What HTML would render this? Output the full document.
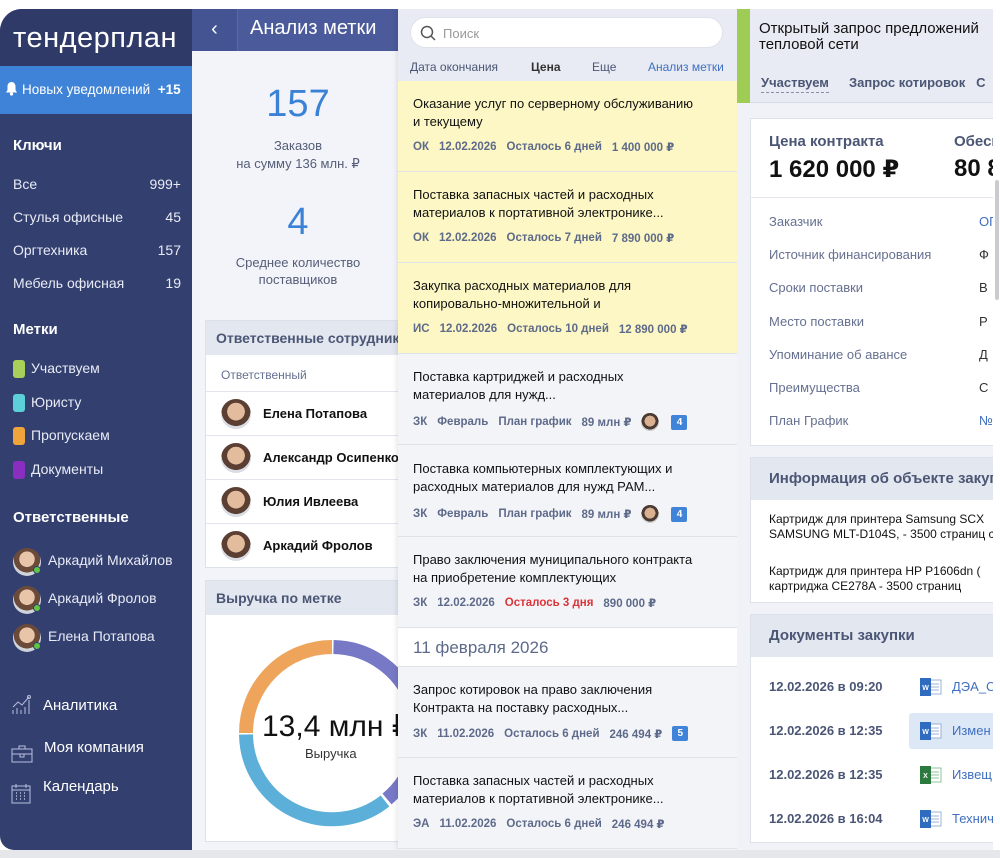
<!DOCTYPE html>
<html><head><meta charset="utf-8"><style>
*{box-sizing:border-box;margin:0;padding:0}
body{width:1000px;height:858px;overflow:hidden;background:#fff;font-family:"Liberation Sans","DejaVu Sans",sans-serif;position:relative}
.abs{position:absolute}
#app{position:absolute;left:0;top:9px;width:993px;height:841px;background:#f2f4f9;border-top-left-radius:22px;border-bottom-left-radius:14px;overflow:hidden}
#shadow{position:absolute;left:0;top:850px;width:1000px;height:8px;background:#e6e7ea}
#side{position:absolute;left:0;top:0;width:192px;height:841px;background:#333f6f;color:#fff}
.logo{position:absolute;left:0;top:0;width:192px;height:57px;background:#2f3a68;font-size:29px;padding:13px 0 0 13px;letter-spacing:0.5px}
.notif{position:absolute;left:0;top:57px;width:192px;height:48px;background:#3e83d8;font-size:13.5px;padding:16px 0 0 22px;white-space:nowrap}
.sh{position:absolute;left:13px;font-size:15px;font-weight:bold}
.si{position:absolute;left:13px;width:168px;font-size:14px;color:#e8ebf5;display:flex;justify-content:space-between}
.tag{position:absolute;left:13px;width:12px;height:18px;border-radius:3px}
.tl{position:absolute;left:31px;font-size:14px;color:#e8ebf5}
.av{position:absolute;border-radius:50%;background:radial-gradient(circle at 50% 40%,#e8c4a8 0 35%,#6b4a3a 36% 60%,#cfd3da 61%)}
.dot{position:absolute;width:8px;height:8px;border-radius:50%;background:#5fc641;border:1px solid #333f6f}
#an{position:absolute;left:192px;top:0;width:206px;height:841px}
.anh{position:absolute;left:0;top:0;width:206px;height:42px;background:#4b5a9a;color:#fff}
.card{position:absolute;background:#fff;border:1px solid #dde1ea}
.ch{background:#e3e7f0;color:#4b5675;font-weight:bold;font-size:14px;padding:9px 10px;height:34px;white-space:nowrap;overflow:hidden}
.row{height:44px;border-top:1px solid #e3e6ee;font-size:13px;font-weight:bold;color:#111;display:flex;align-items:center;white-space:nowrap}
.ra{width:30px;height:30px;border-radius:50%;margin:0 12px 0 15px;background:radial-gradient(circle at 50% 42%,#e3bc9e 0 38%,#5b3f32 39% 62%,#d9dce2 63%)}
#mid{position:absolute;left:398px;top:0;width:339px;height:841px;background:#f3f4f8;box-shadow:0 0 6px rgba(0,0,0,.15)}
.mh{position:absolute;left:0;top:0;width:339px;height:72px;background:#e8ebf3}
.it{position:absolute;left:0;width:339px;height:91px;border-bottom:1px solid #dfe2e9;padding:14px 0 0 15px}
.it .t{font-size:13px;color:#111;line-height:18px}
.it .m{font-size:11.5px;font-weight:bold;color:#5e6a8a;margin-top:9px;display:flex;align-items:center;white-space:nowrap}
.it .m span{margin-right:10px}
.y{background:#fcf7c4}
.badge{display:inline-block;background:#3f84d9;color:#fff;font-size:10px;width:16px;height:15px;border-radius:2px;text-align:center;line-height:15px}
.mav{width:18px;height:18px;border-radius:50%;position:relative;background:radial-gradient(circle at 50% 45%,#d9b190 0 40%,#4a3a33 41% 62%,#ccc 63%)}
#rt{position:absolute;left:737px;top:0;width:256px;height:841px;background:#f0f2f7;overflow:hidden}
.rl{position:absolute;left:32px;font-size:13px;color:#667090;white-space:nowrap}
.rv{position:absolute;left:242px;font-size:13px;color:#333}
.dd{position:absolute;left:32px;font-size:13px;font-weight:bold;color:#4b5675}
.ic{position:absolute;left:183px;width:22px;height:18px}
.dl{position:absolute;left:215px;font-size:13px;color:#3f6fc0;white-space:nowrap}
</style></head><body>
<div id="app">
 <div id="side">
  <div class="logo">тендерплан</div>
  <div class="notif"><svg class="abs" style="left:5px;top:15px" width="13" height="15" viewBox="0 0 13 15" fill="#fff"><path d="M6.5 1C4 1 2.5 3 2.5 5.5V9L1 11.5h11L10.5 9V5.5C10.5 3 9 1 6.5 1z"/><circle cx="6.5" cy="13" r="1.6"/></svg>Новых уведомлений &nbsp;<b>+15</b></div>
  <div class="sh" style="top:128px">Ключи</div>
  <div class="si" style="top:167px"><span>Все</span><span>999+</span></div>
  <div class="si" style="top:200px"><span>Стулья офисные</span><span>45</span></div>
  <div class="si" style="top:233px"><span>Оргтехника</span><span>157</span></div>
  <div class="si" style="top:266px"><span>Мебель офисная</span><span>19</span></div>
  <div class="sh" style="top:312px">Метки</div>
  <div class="tag" style="top:351px;background:#a6d05a"></div><div class="tl" style="top:351px">Участвуем</div>
  <div class="tag" style="top:385px;background:#5cd0d8"></div><div class="tl" style="top:385px">Юристу</div>
  <div class="tag" style="top:418px;background:#f0a43c"></div><div class="tl" style="top:418px">Пропускаем</div>
  <div class="tag" style="top:452px;background:#8a2ec0"></div><div class="tl" style="top:452px">Документы</div>
  <div class="sh" style="top:500px">Ответственные</div>
  <div class="av" style="left:13px;top:539px;width:28px;height:28px"></div><div class="dot" style="left:33px;top:557px"></div><div class="tl" style="left:48px;top:543px">Аркадий Михайлов</div>
  <div class="av" style="left:13px;top:577px;width:28px;height:28px"></div><div class="dot" style="left:33px;top:595px"></div><div class="tl" style="left:48px;top:581px">Аркадий Фролов</div>
  <div class="av" style="left:13px;top:615px;width:28px;height:28px"></div><div class="dot" style="left:33px;top:633px"></div><div class="tl" style="left:48px;top:619px">Елена Потапова</div>
  <svg class="abs" style="left:11px;top:685px" width="22" height="22" viewBox="0 0 22 22" fill="none" stroke="#b8c0dc" stroke-width="1"><path d="M2 20v-4M6 20v-6M10 20v-4M14 20v-7M18 20V6M2 13l5-5 4 3 7-8"/><circle cx="18" cy="3" r="1.5"/></svg>
  <div class="tl" style="left:43px;top:688px;font-size:15px;color:#fff">Аналитика</div>
  <svg class="abs" style="left:11px;top:736px" width="22" height="18" viewBox="0 0 22 18" fill="none" stroke="#b8c0dc"><rect x="1" y="4" width="20" height="13"/><path d="M8 4V1h6v3M1 9h20M9 9v3h4V9"/></svg>
  <div class="tl" style="left:44px;top:730px;font-size:15px;color:#fff">Моя компания</div>
  <svg class="abs" style="left:11px;top:774px" width="20" height="21" viewBox="0 0 20 21" fill="none" stroke="#b8c0dc"><rect x="1" y="3" width="18" height="17"/><path d="M5 1v4M15 1v4M1 7h18"/><path d="M5 10h1M9 10h1M13 10h1M5 13h1M9 13h1M13 13h1M5 16h1M9 16h1M13 16h1" stroke-width="1.5"/></svg>
  <div class="tl" style="left:43px;top:769px;font-size:15px;color:#fff">Календарь</div>
 </div>
 <div id="an">
  <div class="anh"><div class="abs" style="left:0;top:0;width:46px;height:42px;background:#445392;border-right:1px solid #5a68a6;font-size:20px;text-align:center;line-height:40px">‹</div><div class="abs" style="left:58px;top:8px;font-size:20px;white-space:nowrap">Анализ метки</div></div>
  <div class="abs" style="left:0;top:74px;width:212px;text-align:center;font-size:38px;color:#3b82d6">157</div>
  <div class="abs" style="left:0;top:128px;width:212px;text-align:center;font-size:13px;color:#555e78;line-height:18px">Заказов<br>на сумму 136 млн. ₽</div>
  <div class="abs" style="left:0;top:192px;width:212px;text-align:center;font-size:38px;color:#3b82d6">4</div>
  <div class="abs" style="left:0;top:245px;width:212px;text-align:center;font-size:13px;color:#555e78;line-height:17px">Среднее количество<br>поставщиков</div>
  <div class="card" style="left:13px;top:311px;width:200px;height:248px">
   <div class="ch">Ответственные сотрудники</div>
   <div style="height:36px;font-size:12px;color:#667090;padding:13px 0 0 15px">Ответственный</div>
   <div class="row"><div class="ra"></div>Елена Потапова</div>
   <div class="row"><div class="ra"></div>Александр Осипенко</div>
   <div class="row"><div class="ra"></div>Юлия Ивлеева</div>
   <div class="row"><div class="ra"></div>Аркадий Фролов</div>
  </div>
  <div class="card" style="left:13px;top:571px;width:200px;height:262px">
   <div class="ch">Выручка по метке</div>
  </div>
  <svg class="abs" style="left:0;top:600px" width="206" height="240">
   <g fill="none" stroke-width="14" transform="translate(140,124)">
    <path d="M-86 0A86 86 0 0 1 0 -86" stroke="#eea45a"/>
    <path d="M1.5 -86A86 86 0 0 1 55 66" stroke="#7778c6"/>
    <path d="M53 68A86 86 0 0 1 -86 1.5" stroke="#5bafd9"/>
   </g>
  </svg>
  <div class="abs" style="left:70px;top:700px;font-size:30px;color:#111;white-space:nowrap">13,4 млн ₽</div>
  <div class="abs" style="left:113px;top:737px;font-size:13px;color:#333">Выручка</div>
 </div>
 <div id="mid">
  <div class="mh">
   <div class="abs" style="left:12px;top:8px;width:313px;height:31px;background:#fff;border-radius:16px;border:1px solid #dfe2ea"><svg class="abs" style="left:9px;top:7px" width="16" height="16" fill="none" stroke="#555" stroke-width="1.5"><circle cx="7" cy="7" r="5.5"/><path d="M11 11l4 4"/></svg><span class="abs" style="left:32px;top:8px;font-size:13px;color:#999">Поиск</span></div>
   <div class="abs" style="left:12px;top:51px;font-size:12px;color:#4b5675">Дата окончания</div>
   <div class="abs" style="left:133px;top:51px;font-size:12px;color:#333;font-weight:bold">Цена</div>
   <div class="abs" style="left:194px;top:51px;font-size:12px;color:#4b5675">Еще</div>
   <div class="abs" style="left:250px;top:51px;font-size:12px;color:#3f6fc0">Анализ метки</div>
  </div>
  <div class="it y" style="top:72px"><div class="t">Оказание услуг по серверному обслуживанию<br>и текущему</div><div class="m"><span>ОК</span><span>12.02.2026</span><span>Осталось 6 дней</span><span>1 400 000 ₽</span></div></div>
  <div class="it y" style="top:163px"><div class="t">Поставка запасных частей и расходных<br>материалов к портативной электронике...</div><div class="m"><span>ОК</span><span>12.02.2026</span><span>Осталось 7 дней</span><span>7 890 000 ₽</span></div></div>
  <div class="it y" style="top:254px"><div class="t">Закупка расходных материалов для<br>копировально-множительной и</div><div class="m"><span>ИС</span><span>12.02.2026</span><span>Осталось 10 дней</span><span>12 890 000 ₽</span></div></div>
  <div class="it" style="top:345px"><div class="t">Поставка картриджей и расходных<br>материалов для нужд...</div><div class="m"><span>ЗК</span><span>Февраль</span><span>План график</span><span>89 млн ₽</span><div class="mav" style="margin:0 12px 0 0"></div><div class="badge">4</div></div></div>
  <div class="it" style="top:437px"><div class="t">Поставка компьютерных комплектующих и<br>расходных материалов для нужд РАМ...</div><div class="m"><span>ЗК</span><span>Февраль</span><span>План график</span><span>89 млн ₽</span><div class="mav" style="margin:0 12px 0 0"></div><div class="badge">4</div></div></div>
  <div class="it" style="top:528px"><div class="t">Право заключения муниципального контракта<br>на приобретение комплектующих</div><div class="m"><span>ЗК</span><span>12.02.2026</span><span style="color:#d9343a">Осталось 3 дня</span><span>890 000 ₽</span></div></div>
  <div class="abs" style="left:0;top:619px;width:339px;height:39px;background:#fff;border-bottom:1px solid #dfe2e9;font-size:17px;color:#5e6a8a;padding:10px 0 0 15px">11 февраля 2026</div>
  <div class="it" style="top:658px"><div class="t">Запрос котировок на право заключения<br>Контракта на поставку расходных...</div><div class="m"><span>ЗК</span><span>11.02.2026</span><span>Осталось 6 дней</span><span>246 494 ₽</span><div class="badge">5</div></div></div>
  <div class="it" style="top:749px"><div class="t">Поставка запасных частей и расходных<br>материалов к портативной электронике...</div><div class="m"><span>ЭА</span><span>11.02.2026</span><span>Осталось 6 дней</span><span>246 494 ₽</span></div></div>
 </div>
 <div id="rt">
  <div class="abs" style="left:0;top:0;width:256px;height:94px;background:#e8ebf3;border-bottom:1px solid #d8dce6"></div>
  <div class="abs" style="left:0;top:0;width:13px;height:94px;background:#9fcc55"></div>
  <div class="abs" style="left:22px;top:12px;font-size:15px;color:#111;line-height:16px;white-space:nowrap">Открытый запрос предложений<br>тепловой сети</div>
  <div class="abs" style="left:24px;top:66px;font-size:13px;font-weight:bold;color:#4b5675;border-bottom:1px dashed #8890a8;padding-bottom:2px">Участвуем</div>
  <div class="abs" style="left:112px;top:66px;font-size:13px;font-weight:bold;color:#4b5675;white-space:nowrap">Запрос котировок &nbsp;&nbsp;С</div>
  <div class="abs" style="left:13px;top:109px;width:260px;height:328px;background:#fff;border:1px solid #dde1ea"></div>
  <div class="abs" style="left:13px;top:188px;width:260px;height:1px;background:#e3e6ee"></div>
  <div class="abs" style="left:32px;top:124px;font-size:15px;font-weight:bold;color:#4b5675">Цена контракта</div>
  <div class="abs" style="left:32px;top:146px;font-size:24px;font-weight:bold;color:#111;white-space:nowrap">1 620 000 ₽</div>
  <div class="abs" style="left:217px;top:124px;font-size:15px;font-weight:bold;color:#4b5675;white-space:nowrap">Обеспечение</div>
  <div class="abs" style="left:217px;top:146px;font-size:24px;font-weight:bold;color:#111;white-space:nowrap">80 8</div>
  <div class="rl" style="top:205px">Заказчик</div><div class="rv" style="top:205px;color:#3f6fc0">ОГ</div>
  <div class="rl" style="top:238px">Источник финансирования</div><div class="rv" style="top:238px">Ф</div>
  <div class="rl" style="top:271px">Сроки поставки</div><div class="rv" style="top:271px">В</div>
  <div class="rl" style="top:305px">Место поставки</div><div class="rv" style="top:305px">Р</div>
  <div class="rl" style="top:338px">Упоминание об авансе</div><div class="rv" style="top:338px">Д</div>
  <div class="rl" style="top:371px">Преимущества</div><div class="rv" style="top:371px">С</div>
  <div class="rl" style="top:404px">План График</div><div class="rv" style="top:404px;color:#3f6fc0">№</div>
  <div class="card" style="left:13px;top:448px;width:260px;height:146px"><div class="ch" style="height:42px;padding:12px 18px;font-size:15px">Информация об объекте закупки</div></div>
  <div class="abs" style="left:32px;top:503px;font-size:12px;color:#111;line-height:15px;white-space:nowrap">Картридж для принтера Samsung SCX<br>SAMSUNG MLT-D104S, - 3500 страниц с</div>
  <div class="abs" style="left:32px;top:555px;font-size:12px;color:#111;line-height:15px;white-space:nowrap">Картридж для принтера HP P1606dn (<br>картриджа CE278A - 3500 страниц</div>
  <div class="card" style="left:13px;top:605px;width:260px;height:229px"><div class="ch" style="height:42px;padding:12px 18px;font-size:15px">Документы закупки</div></div>
  <div class="abs" style="left:172px;top:704px;width:90px;height:36px;background:#dde8f7;border-radius:3px"></div>
  <div class="dd" style="top:670px">12.02.2026 в 09:20</div>
  <svg class="ic" style="top:669px" viewBox="0 0 22 18"><rect x="8" y="2" width="13" height="14" fill="#fff" stroke="#9bb0d6"/><path d="M11 6h8M11 9h8M11 12h8" stroke="#9bb0d6"/><rect x="0" y="0" width="11" height="18" fill="#2f6bbf"/><text x="5.5" y="12" font-size="7" fill="#fff" text-anchor="middle" font-family="Liberation Sans" font-weight="bold">W</text></svg>
  <div class="dl" style="top:670px">ДЭА_С</div>
  <div class="dd" style="top:714px">12.02.2026 в 12:35</div>
  <svg class="ic" style="top:713px" viewBox="0 0 22 18"><rect x="8" y="2" width="13" height="14" fill="#fff" stroke="#9bb0d6"/><path d="M11 6h8M11 9h8M11 12h8" stroke="#9bb0d6"/><rect x="0" y="0" width="11" height="18" fill="#2f6bbf"/><text x="5.5" y="12" font-size="7" fill="#fff" text-anchor="middle" font-family="Liberation Sans" font-weight="bold">W</text></svg>
  <div class="dl" style="top:714px">Измен</div>
  <div class="dd" style="top:758px">12.02.2026 в 12:35</div>
  <svg class="ic" style="top:757px" viewBox="0 0 22 18"><rect x="8" y="2" width="13" height="14" fill="#fff" stroke="#8fc49a"/><path d="M11 6h8M11 9h8M11 12h8" stroke="#8fc49a"/><rect x="0" y="0" width="11" height="18" fill="#2d7a3e"/><text x="5.5" y="12" font-size="7" fill="#fff" text-anchor="middle" font-family="Liberation Sans" font-weight="bold">X</text></svg>
  <div class="dl" style="top:758px">Извещ</div>
  <div class="dd" style="top:802px">12.02.2026 в 16:04</div>
  <svg class="ic" style="top:801px" viewBox="0 0 22 18"><rect x="8" y="2" width="13" height="14" fill="#fff" stroke="#9bb0d6"/><path d="M11 6h8M11 9h8M11 12h8" stroke="#9bb0d6"/><rect x="0" y="0" width="11" height="18" fill="#2f6bbf"/><text x="5.5" y="12" font-size="7" fill="#fff" text-anchor="middle" font-family="Liberation Sans" font-weight="bold">W</text></svg>
  <div class="dl" style="top:802px">Технич</div>
 </div>
</div>
<div class="abs" style="left:995px;top:180px;width:4px;height:120px;background:#c9cbd0;border-radius:2px"></div>
<div id="shadow"></div>
</body></html>
